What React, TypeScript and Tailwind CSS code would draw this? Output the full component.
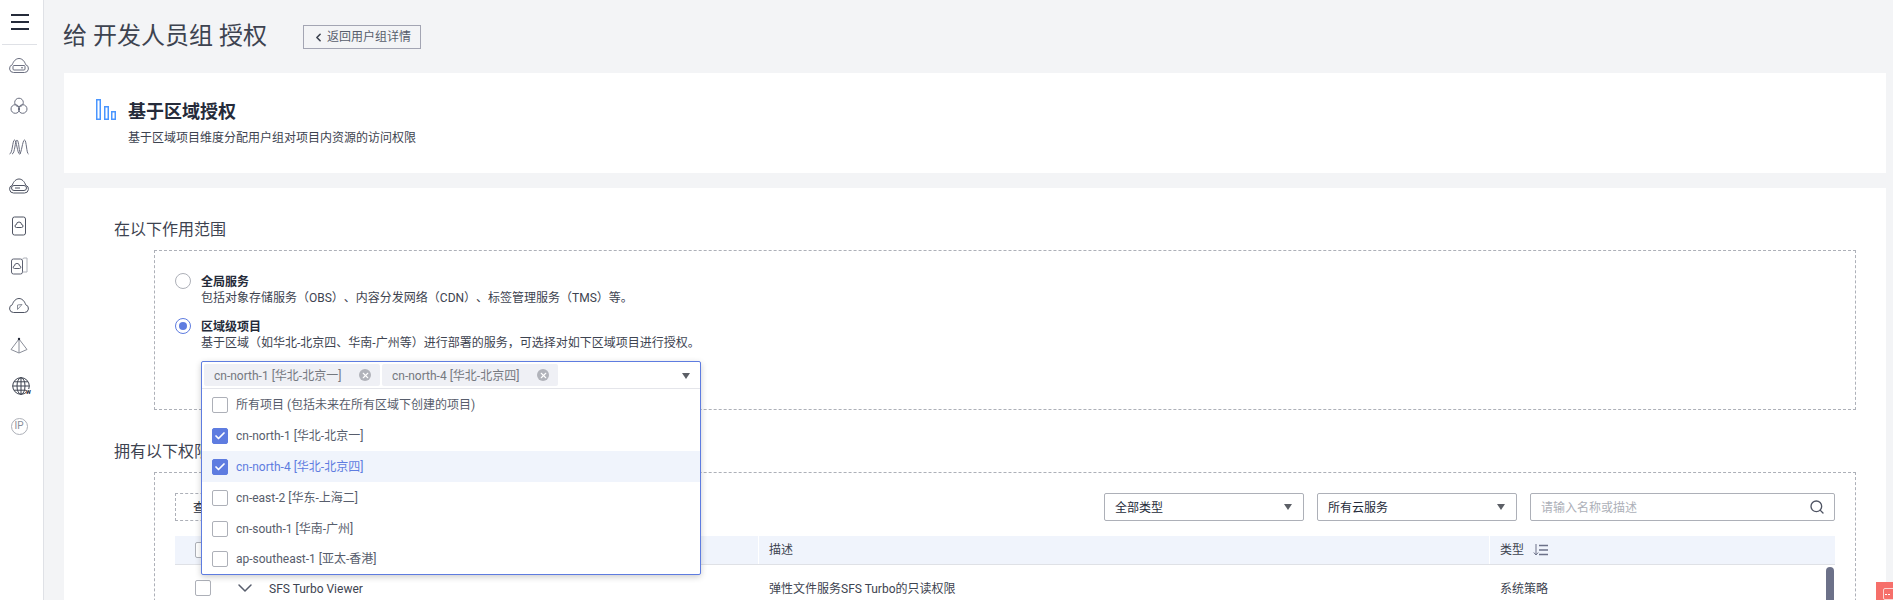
import type { ReactNode } from 'react';
import { Check, ChevronDown, ChevronLeft, Search, X } from 'lucide-react';

function SideIcon({ children, stroke = '#6b6f80' }: { children: ReactNode; stroke?: string }) {
  return (
    <div className="h-10 flex items-center justify-center">
      <svg width="22" height="22" viewBox="0 0 22 22" fill="none" stroke={stroke} strokeWidth="1">
        {children}
      </svg>
    </div>
  );
}

function Sidebar() {
  return (
    <div className="w-[44px] shrink-0 bg-white border-r border-[#dfe1e6] h-[600px] flex flex-col">
      <div className="h-[45px] mx-[2px] mr-[6px] border-b border-[#dfe1e6] flex flex-col items-center justify-center gap-[5px] pb-[1px]">
        <div className="w-[18px] h-[2px] bg-[#252b3a]" />
        <div className="w-[18px] h-[2px] bg-[#252b3a]" />
        <div className="w-[18px] h-[2px] bg-[#252b3a]" />
      </div>
      <div className="pr-[5px] pt-[1px]">
        <SideIcon>
          <path d="M5.5 17.5h11a4 4 0 0 0 1.2-7.8C16.5 6 14 3.5 11 3.5S5.5 6 4.3 9.7a4 4 0 0 0 1.2 7.8z" />
          <rect x="5" y="10.5" width="12" height="4.5" rx="1" />
          <path d="M13 12.8h2" />
        </SideIcon>
        <SideIcon>
          <circle cx="11" cy="7.5" r="4.3" />
          <circle cx="7.3" cy="14" r="4.3" />
          <circle cx="14.7" cy="14" r="4.3" />
        </SideIcon>
        <SideIcon>
          <path d="M1.5 19c3 0 3-14 5-14s3 14 5 14 3-14 5-14 2 14 4 14" />
          <path d="M4 19c3 0 3-14 5-14s2 14 4 14" />
        </SideIcon>
        <SideIcon stroke="#4f5463">
          <path d="M5.5 18h11a4 4 0 0 0 1.2-7.8C16.5 6.5 14 4 11 4S5.5 6.5 4.3 10.2A4 4 0 0 0 5.5 18z" />
          <rect x="3.5" y="10.5" width="15" height="5" rx="2.5" />
          <path d="M7 13h5" />
        </SideIcon>
        <SideIcon stroke="#4f5463">
          <rect x="4.5" y="2" width="13" height="18" rx="2" />
          <path d="M8.5 12.5h5a1.5 1.5 0 0 0 0-3 2.5 2.5 0 0 0-5 0 1.5 1.5 0 0 0 0 3z" />
        </SideIcon>
        <SideIcon stroke="#5c6070">
          <rect x="3.5" y="4" width="11" height="15" rx="2" />
          <path d="M14.5 4.5l1-1.5h3.5v14h-4.5" stroke="#adb0b8" />
          <path d="M6.5 13.5h5a1.3 1.3 0 0 0 0-2.6 2.3 2.3 0 0 0-5 0 1.3 1.3 0 0 0 0 2.6z" />
        </SideIcon>
        <SideIcon stroke="#4f5463">
          <path d="M5.5 17.5h11a4 4 0 0 0 1.2-7.8C16.5 6 14 3.5 11 3.5S5.5 6 4.3 9.7a4 4 0 0 0 1.2 7.8z" />
          <path d="M9.5 14.5V10l4.5-.5z" stroke="#8a8e99" />
        </SideIcon>
        <SideIcon stroke="#8a8e99">
          <path d="M11 4L3 14.5 11 18l8-3.500z" />
          <path d="M11 4v14" />
          <circle cx="11" cy="4" r="1.2" fill="#252b3a" stroke="none" />
        </SideIcon>
        <div className="h-10 flex items-center justify-center pl-[4px]">
          <div className="relative">
            <svg width="18" height="18" viewBox="0 0 18 18" fill="none" stroke="#3d4350" strokeWidth="1" className="block">
              <circle cx="9" cy="9" r="8.3" />
              <ellipse cx="9" cy="9" rx="4" ry="8.3" />
              <path d="M9 .7v16.600M.7 9h16.600M2 4.800h14M2 13.200h14" />
            </svg>
            <span className="absolute -right-[1px] -bottom-[1px] bg-white text-[7px] leading-[7px] font-bold text-[#252b3a]">w</span>
          </div>
        </div>
        <div className="h-10 flex items-center justify-center">
          <div className="w-[17px] h-[17px] rounded-full border border-[#adb0b8] flex items-center justify-center text-[10px] leading-none text-[#8a8e99]">
            IP
          </div>
        </div>
      </div>
    </div>
  );
}

function Radio({ checked }: { checked?: boolean }) {
  return (
    <div className={`w-4 h-4 shrink-0 -mt-[1px] rounded-full border bg-white flex items-center justify-center ${checked ? 'border-[#5e7ce0]' : 'border-[#adb0b8]'}`}>
      {checked && <div className="w-2 h-2 rounded-full bg-[#5e7ce0]" />}
    </div>
  );
}

function Box({ checked }: { checked?: boolean }) {
  return (
    <div className={`w-4 h-4 shrink-0 rounded-[2px] border flex items-center justify-center ${checked ? 'bg-[#5e7ce0] border-[#5e7ce0]' : 'bg-white border-[#adb0b8]'}`}>
      {checked && <Check size={12} strokeWidth={3.5} className="text-white" />}
    </div>
  );
}

function Tag({ label }: { label: string }) {
  return (
    <div className="h-[22px] w-[176px] rounded-[2px] bg-[#eff0f5] flex items-center justify-between pl-[10px] pr-[9px] text-[12px] whitespace-nowrap text-[#75787f]">
      <span className="pt-[1px]">{label}</span>
      <span className="w-3 h-3 rounded-full bg-[#b1b3ba] flex items-center justify-center">
        <X size={9} strokeWidth={3} className="text-white" />
      </span>
    </div>
  );
}

function Caret() {
  return <span className="block w-0 h-0 border-x-[4px] border-x-transparent border-t-[6px] border-t-[#5c5f66]" />;
}

const regions = [
  { label: '所有项目 (包括未来在所有区域下创建的项目)' },
  { label: 'cn-north-1 [华北-北京一]', checked: true },
  { label: 'cn-north-4 [华北-北京四]', checked: true, active: true },
  { label: 'cn-east-2 [华东-上海二]' },
  { label: 'cn-south-1 [华南-广州]' },
  { label: 'ap-southeast-1 [亚太-香港]' },
];

function RegionSelect() {
  return (
    <div className="absolute left-[201px] top-[361px] w-[500px] z-10 bg-white border border-[#5e7ce0] rounded-[2px] shadow-[0_2px_6px_rgba(0,0,0,0.2)]">
      <div className="h-[27px] flex items-start gap-[2px] pl-[2px] pt-[2px] pr-[10px] border-b border-[#e4e5ea]">
        <Tag label="cn-north-1 [华北-北京一]" />
        <Tag label="cn-north-4 [华北-北京四]" />
        <div className="ml-auto pt-[9px]">
          <Caret />
        </div>
      </div>
      {regions.map((r) => (
        <div
          key={r.label}
          className={`h-[31px] last:h-[30px] flex items-center gap-2 pl-[10px] text-[12px] ${r.active ? 'bg-[#f0f4fc] text-[#5e7ce0]' : 'text-[#575d6c]'}`}
        >
          <Box checked={r.checked} />
          <span>{r.label}</span>
        </div>
      ))}
    </div>
  );
}

function Dropdown({ label }: { label: string }) {
  return (
    <div className="w-[200px] h-[28px] border border-[#adb0b8] rounded-[2px] flex items-center justify-between pl-[10px] pr-[11px] text-[12px] text-[#252b3a]">
      <span className="pt-[1px]">{label}</span>
      <Caret />
    </div>
  );
}

export default function App() {
  return (
    <div className="relative w-[1893px] h-[600px] overflow-hidden bg-[#f3f4f6] flex font-['Roboto','Noto_Sans_CJK_SC',sans-serif] [text-spacing-trim:space-all]">
      <Sidebar />
      <div className="flex-1 min-w-0 pl-[20px] pr-[7px]">
        <div className="h-[73px] flex items-center gap-[36px] pb-[1px]">
          <h1 className="-ml-[1px] text-[24px] font-normal text-[#3d4350] leading-none">给 开发人员组 授权</h1>
          <div className="h-[24px] w-[118px] mt-[2px] border border-[#a3a5b3] flex items-center pl-[8px] gap-[2px] text-[12px] text-[#575d6c]">
            <ChevronLeft size={13} strokeWidth={3} className="text-[#3d4350]" />
            <span>返回用户组详情</span>
          </div>
        </div>

        <div className="h-[100px] bg-white flex items-start pl-[32px] pt-[26px] gap-[11px]">
          <svg width="21" height="21" viewBox="0 0 21 21" fill="none" stroke="#4a96ff" strokeWidth="1.500">
            <rect x=".75" y=".75" width="3.500" height="19.500" />
            <rect x="8.750" y="7.750" width="3.500" height="12.500" />
            <rect x="15.750" y="12.750" width="3.500" height="7.500" />
          </svg>
          <div>
            <div className="text-[18px] font-bold text-[#252b3a] leading-[26px]">基于区域授权</div>
            <div className="text-[12px] text-[#3d4350] mt-[5px] leading-[16px]">基于区域项目维度分配用户组对项目内资源的访问权限</div>
          </div>
        </div>

        <div className="mt-[15px] h-[430px] bg-white pl-[50px] pr-[30px]">
          <div className="pt-[30px] text-[16px] text-[#3d4350] leading-[24px]">在以下作用范围</div>
          <div className="mt-[8px] ml-[40px] h-[160px] border border-dashed border-[#adb0b8] pl-[20px] pt-[23px]">
            <div className="flex gap-[10px]">
              <Radio />
              <div>
                <div className="text-[12px] font-bold text-[#252b3a] leading-[16px]">全局服务</div>
                <div className="text-[12px] text-[#3d4350] leading-[16px]">包括对象存储服务（OBS）、内容分发网络（CDN）、标签管理服务（TMS）等。</div>
              </div>
            </div>
            <div className="flex gap-[10px] mt-[13px]">
              <Radio checked />
              <div>
                <div className="text-[12px] font-bold text-[#252b3a] leading-[16px]">区域级项目</div>
                <div className="text-[12px] text-[#3d4350] leading-[16px]">基于区域（如华北-北京四、华南-广州等）进行部署的服务，可选择对如下区域项目进行授权。</div>
              </div>
            </div>
          </div>

          <div className="mt-[30px] text-[16px] text-[#3d4350] leading-[24px]">拥有以下权限</div>
          <div className="mt-[8px] ml-[40px] h-[170px] border border-dashed border-[#adb0b8] px-[20px] pt-[20px]">
            <div className="flex items-center h-[28px]">
              <div className="w-[120px] h-[28px] border border-dashed border-[#adb0b8] flex items-center pl-[17px] pt-[1px] text-[12px] text-[#252b3a]">查看已选</div>
              <div className="ml-auto flex gap-[13px]">
                <Dropdown label="全部类型" />
                <Dropdown label="所有云服务" />
                <div className="w-[305px] h-[28px] border border-[#adb0b8] rounded-[2px] flex items-center justify-between pl-[10px] pr-[9px] text-[12px] text-[#adb0b8]">
                  <span className="pt-[1px]">请输入名称或描述</span>
                  <Search size={16} className="text-[#4f5463]" />
                </div>
              </div>
            </div>
            <div className="mt-[15px] h-[29px] bg-[#f0f4fc] border-b border-[#dfe1e6] grid grid-cols-[583px_731px_1fr] text-[12px] text-[#3d4350]">
              <div className="flex items-center pl-[20px]">
                <Box />
              </div>
              <div className="flex items-center pl-[10px] border-l border-white">描述</div>
              <div className="flex items-center pl-[10px] gap-[9px] border-l border-white">
                <span>类型</span>
                <svg width="15" height="12" viewBox="0 0 15 12" fill="none" stroke="#6c7189" strokeWidth="1.500">
                  <path d="M3 0v11M.8 8.500L3 11l2.200-2.500" strokeWidth="1" />
                  <path d="M6 1.500h9M6 6h9M6 10.500h9" />
                </svg>
              </div>
            </div>
            <div className="relative h-[46px] grid grid-cols-[583px_731px_1fr] text-[12px] text-[#3d4350]">
              <div className="flex items-center pl-[20px]">
                <Box />
                <ChevronDown size={24} strokeWidth={1.5} className="ml-[22px] text-[#575d6c]" />
                <span className="ml-[12px] pt-[1px]">SFS Turbo Viewer</span>
              </div>
              <div className="flex items-center pl-[11px] pt-[1px]">弹性文件服务SFS Turbo的只读权限</div>
              <div className="flex items-center pl-[11px] pt-[1px]">系统策略</div>
              <div className="absolute right-[1px] top-[2px] w-2 h-[60px] rounded-full bg-[#6c7189]" />
            </div>
          </div>
        </div>
      </div>
      <RegionSelect />
      <div className="absolute right-0 top-[582px] w-[17px] h-[18px] bg-[#f66f6a] pl-[7px] pt-[6px]">
        <div className="w-[12px] h-[12px] rounded-[2px] border border-white/70 flex items-center gap-[1px] pl-[1px]">
          <span className="w-[2px] h-[1px] bg-white" />
          <span className="w-[2px] h-[1px] bg-white" />
        </div>
      </div>
    </div>
  );
}
